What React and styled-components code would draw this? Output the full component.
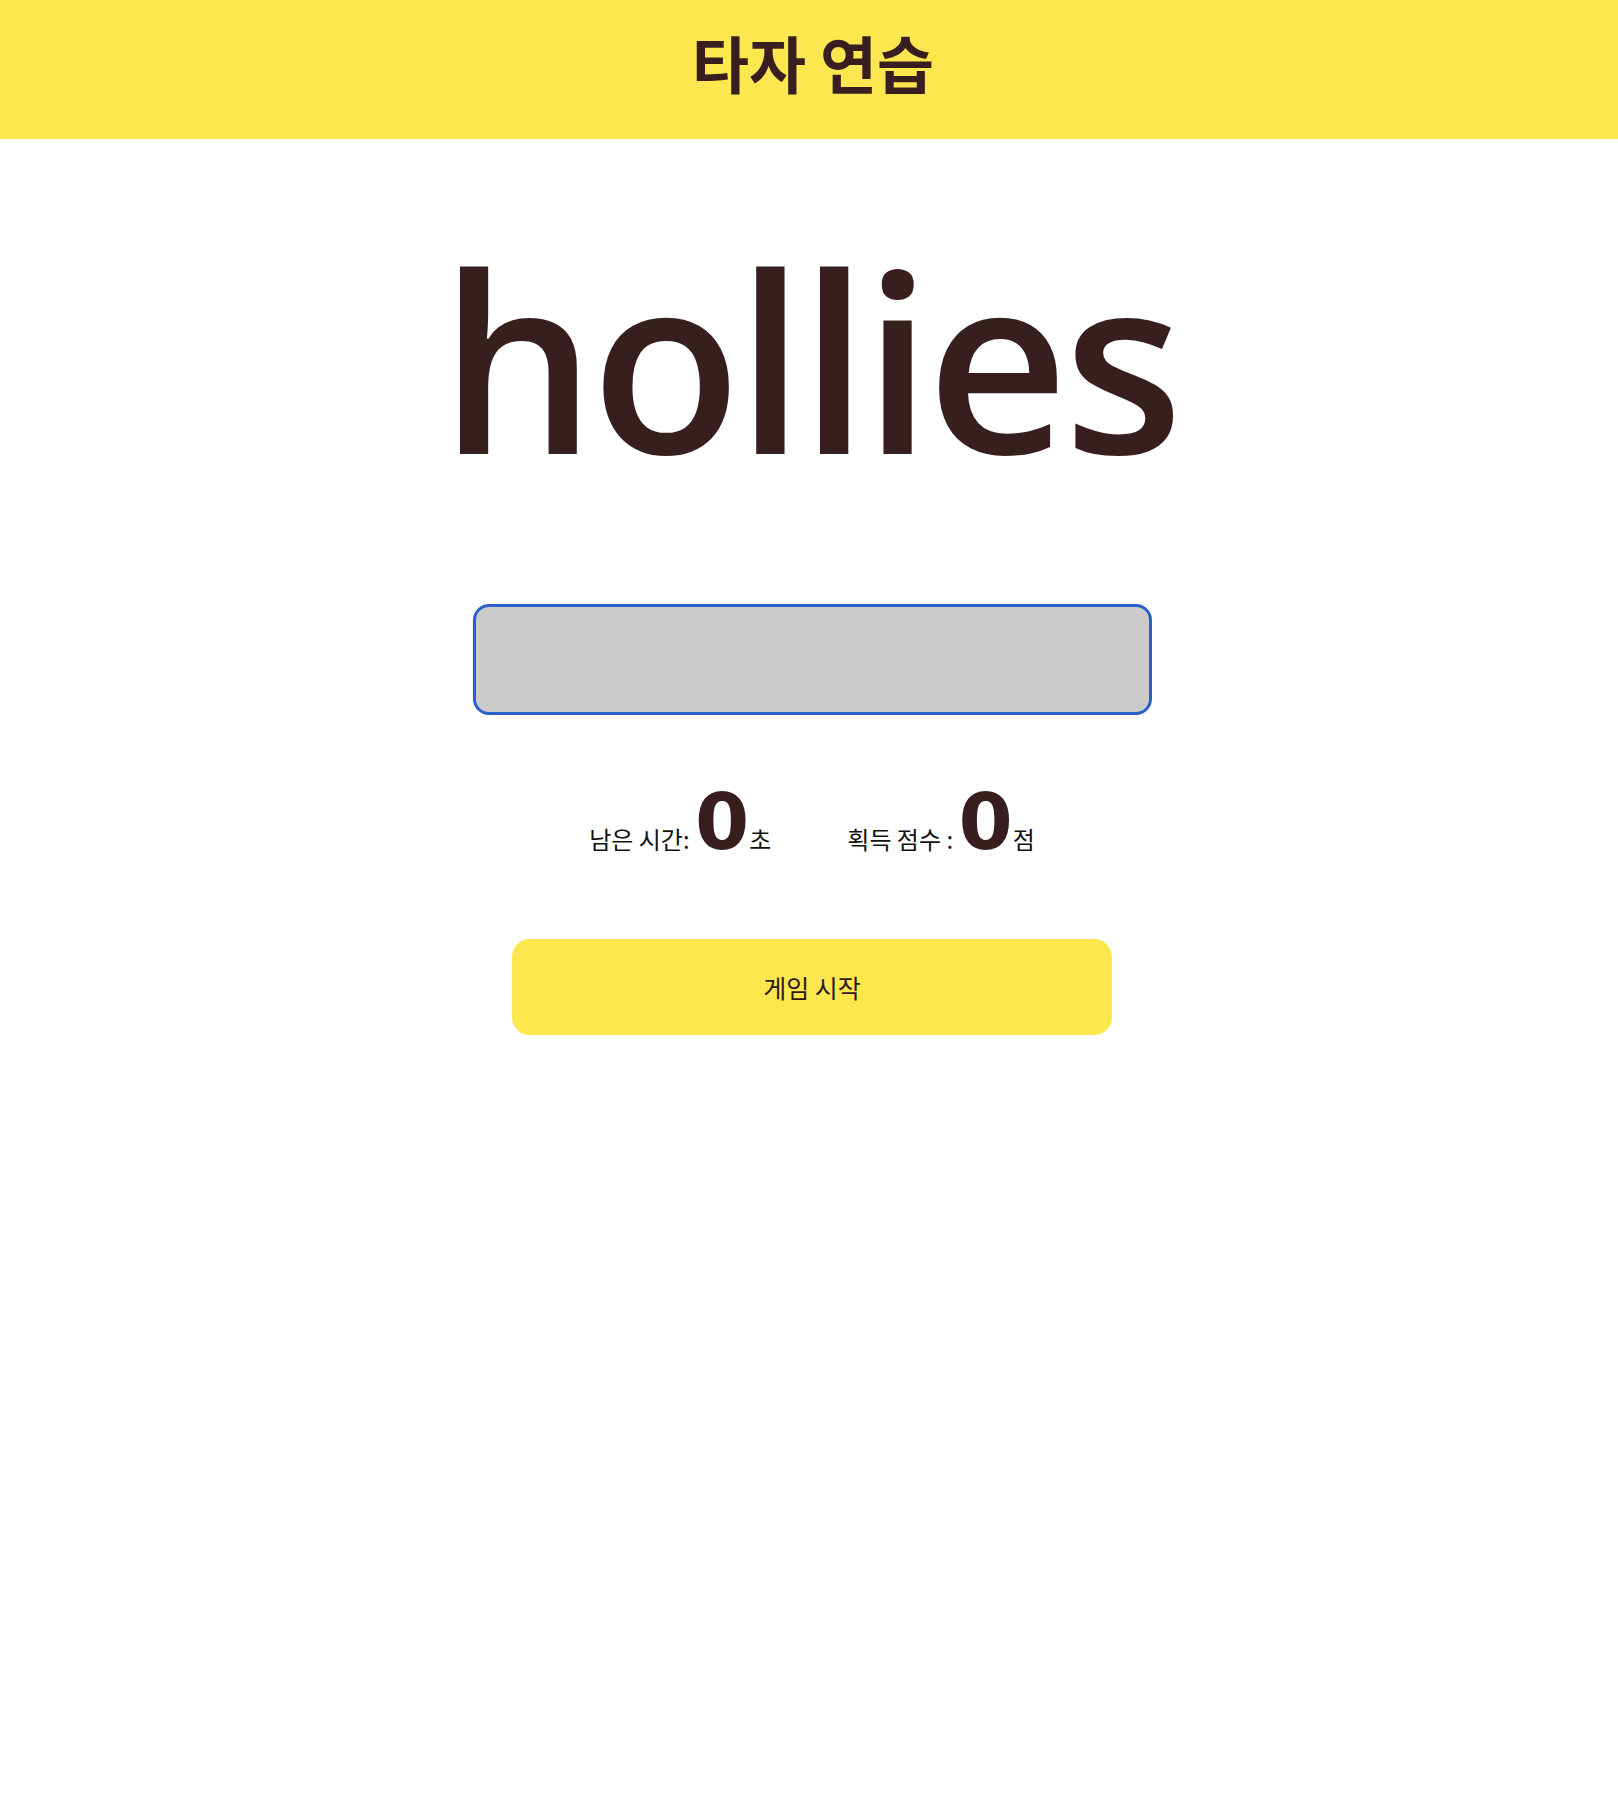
import React from 'react'
import styled, { createGlobalStyle } from "styled-components"

const GlobalStyle = createGlobalStyle`
    body {
        margin: 0;
        background: #fff;
        font-family: "Noto Sans CJK KR", "Noto Sans", sans-serif;
    }
`;

const App = () => {
    return (
        <>
            <GlobalStyle />
            <Header>
                <Title>타자 연습</Title>
            </Header>
            <Main>
                <Word>hollies</Word>
                <WordInput type="text" />
                <Stats>
                    <Stat>남은 시간: <Num>0</Num>초</Stat>
                    <Stat>획득 점수 : <Num>0</Num>점</Stat>
                </Stats>
                <StartButton>게임 시작</StartButton>
            </Main>
        </>
    )
}

export default App;

const Header = styled.header`
    height: 139px;
    box-sizing: border-box;
    padding-bottom: 16px;
    background-color: #fce74e;
    display: flex;
    align-items: center;
    justify-content: center;
`;

const Title = styled.h1`
    margin: 0;
    font-size: 62px;
    font-weight: 700;
    color: #381e1f;
    line-height: 1;
    transform: translateX(4px);
`;

const Main = styled.main`
    display: flex;
    flex-direction: column;
    align-items: center;
`;

const Word = styled.div`
    margin-top: 97px;
    font-family: "Open Sans", "Noto Sans", sans-serif;
    font-size: 246px;
    font-weight: 640;
    letter-spacing: -5px;
    line-height: 1;
    color: #371e1f;
`;

const WordInput = styled.input`
    margin-top: 122px;
    width: 679px;
    height: 111px;
    box-sizing: border-box;
    border: 3px solid #2a60c8;
    border-radius: 16px;
    background-color: #cbcbcb;
    outline: none;
    font-size: 40px;
    text-align: center;
    transform: translateX(3px);
`;

const Stats = styled.div`
    margin-top: 68px;
    display: flex;
    align-items: baseline;
    gap: 76px;
    line-height: 1;
    transform: translateX(3px);
`;

const Stat = styled.span`
    font-size: 24px;
    color: #111;
`;

const Num = styled.span`
    font-family: "DejaVu Sans", "Liberation Sans", sans-serif;
    font-size: 78px;
    font-weight: 700;
    color: #381e1f;
`;

const StartButton = styled.button`
    margin-top: 78px;
    width: 600px;
    height: 96px;
    border: none;
    border-radius: 18px;
    background-color: #fce74e;
    color: #2a1a1a;
    font-family: "Noto Sans CJK KR", sans-serif;
    font-size: 25px;
    cursor: pointer;
    transform: translateX(3px);
`;
